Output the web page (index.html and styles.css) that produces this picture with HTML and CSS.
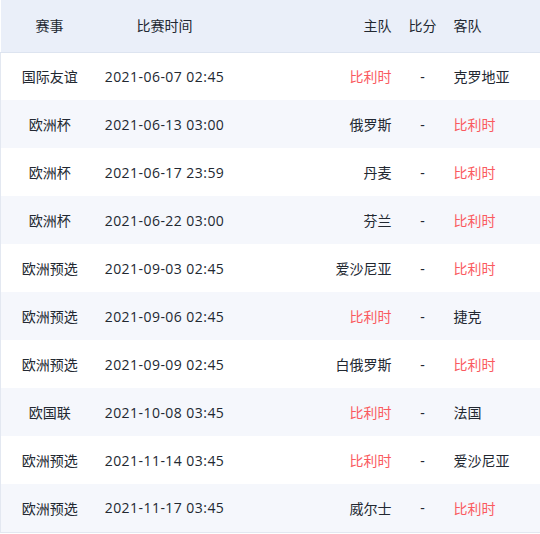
FILE: index.html
```html
<!DOCTYPE html>
<html lang="zh">
<head>
<meta charset="utf-8">
<link rel="stylesheet" href="styles.css">
</head>
<body>
<table class="sched">
  <colgroup>
    <col class="c-evt"><col class="c-time"><col class="c-home"><col class="c-score"><col class="c-away">
  </colgroup>
  <thead>
    <tr><th class="evt">赛事</th><th class="time">比赛时间</th><th class="home">主队</th><th class="score">比分</th><th class="away">客队</th></tr>
  </thead>
  <tbody>
    <tr><td class="evt">国际友谊</td><td class="time">2021-06-07 02:45</td><td class="home hl">比利时</td><td class="score">-</td><td class="away">克罗地亚</td></tr>
    <tr><td class="evt">欧洲杯</td><td class="time">2021-06-13 03:00</td><td class="home">俄罗斯</td><td class="score">-</td><td class="away hl">比利时</td></tr>
    <tr><td class="evt">欧洲杯</td><td class="time">2021-06-17 23:59</td><td class="home">丹麦</td><td class="score">-</td><td class="away hl">比利时</td></tr>
    <tr><td class="evt">欧洲杯</td><td class="time">2021-06-22 03:00</td><td class="home">芬兰</td><td class="score">-</td><td class="away hl">比利时</td></tr>
    <tr><td class="evt">欧洲预选</td><td class="time">2021-09-03 02:45</td><td class="home">爱沙尼亚</td><td class="score">-</td><td class="away hl">比利时</td></tr>
    <tr><td class="evt">欧洲预选</td><td class="time">2021-09-06 02:45</td><td class="home hl">比利时</td><td class="score">-</td><td class="away">捷克</td></tr>
    <tr><td class="evt">欧洲预选</td><td class="time">2021-09-09 02:45</td><td class="home">白俄罗斯</td><td class="score">-</td><td class="away hl">比利时</td></tr>
    <tr><td class="evt">欧国联</td><td class="time">2021-10-08 03:45</td><td class="home hl">比利时</td><td class="score">-</td><td class="away">法国</td></tr>
    <tr><td class="evt">欧洲预选</td><td class="time">2021-11-14 03:45</td><td class="home hl">比利时</td><td class="score">-</td><td class="away">爱沙尼亚</td></tr>
    <tr><td class="evt">欧洲预选</td><td class="time">2021-11-17 03:45</td><td class="home">威尔士</td><td class="score">-</td><td class="away hl">比利时</td></tr>
  </tbody>
</table>
</body>
</html>
```

FILE: styles.css
```css
html, body {
  margin: 0;
  padding: 0;
  background: #ffffff;
}
body {
  font-family: "Noto Sans", "Noto Sans CJK SC", sans-serif;
  font-size: 14px;
  color: #222831;
}
.sched {
  width: 540px;
  border-collapse: collapse;
  table-layout: fixed;
}
.c-evt { width: 98px; }
.c-time { width: 132px; }
.c-home { width: 169px; }
.c-score { width: 46px; }
.c-away { width: 95px; }
.sched th {
  height: 52px;
  padding: 0 8px 2px;
  font-weight: normal;
  background: #eaeff9;
  border-bottom: 1px solid #dde4f0;
  box-sizing: border-box;
  white-space: nowrap;
}
.sched td {
  height: 48px;
  padding: 0 8px;
  box-sizing: border-box;
  white-space: nowrap;
}
.sched .time {
  padding-left: 0;
  padding-right: 0;
  font-family: "Open Sans", "Noto Sans CJK SC", sans-serif;
  letter-spacing: 0.45px;
}
.sched th.time {
  font-family: "Noto Sans", "Noto Sans CJK SC", sans-serif;
  letter-spacing: 0;
}
.sched tbody tr:nth-child(even) td {
  background: #f5f7fc;
}
.sched tbody tr:last-child td {
  border-bottom: 1px solid #e3e8f1;
}
.sched tbody td.evt {
  border-left: 1px solid #e3e8f1;
}
.evt, .time, .score { text-align: center; }
.home { text-align: right; }
.away { text-align: left; }
.hl { color: #fa5a5f; }
```
